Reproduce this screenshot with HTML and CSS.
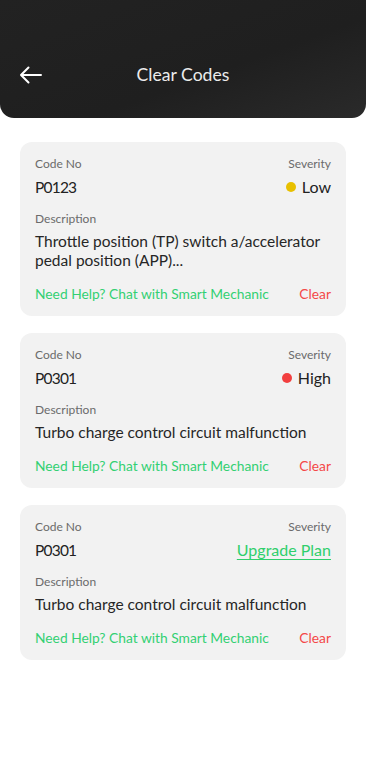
FILE: index.html
```
<!DOCTYPE html>
<html>
<head>
<meta charset="utf-8">
<link rel="stylesheet" href="styles.css">
</head>
<body>
<header class="header">
  <div class="bar">
    <svg class="back" width="24" height="18" viewBox="0 0 24 18"><path d="M22 9H2M9.5 1.5L2 9l7.5 7.5" fill="none" stroke="#fff" stroke-width="2" stroke-linecap="round" stroke-linejoin="round"/></svg>
    <h1 class="title">Clear Codes</h1>
  </div>
</header>
<main class="list">
  <section class="card">
    <div class="row"><span class="label">Code No</span><span class="label">Severity</span></div>
    <div class="row top4"><span class="value code">P0123</span><span class="value sev"><span class="dot low"></span>Low</span></div>
    <div class="label desc-label">Description</div>
    <p class="desc">Throttle position (TP) switch a/accelerator pedal position (APP)...</p>
    <div class="row foot"><a class="help">Need Help? Chat with Smart Mechanic</a><a class="clear">Clear</a></div>
  </section>
  <section class="card">
    <div class="row"><span class="label">Code No</span><span class="label">Severity</span></div>
    <div class="row top4"><span class="value code">P0301</span><span class="value sev"><span class="dot high"></span>High</span></div>
    <div class="label desc-label">Description</div>
    <p class="desc">Turbo charge control circuit malfunction</p>
    <div class="row foot"><a class="help">Need Help? Chat with Smart Mechanic</a><a class="clear">Clear</a></div>
  </section>
  <section class="card">
    <div class="row"><span class="label">Code No</span><span class="label">Severity</span></div>
    <div class="row top4"><span class="value code">P0301</span><a class="value upgrade">Upgrade Plan</a></div>
    <div class="label desc-label">Description</div>
    <p class="desc">Turbo charge control circuit malfunction</p>
    <div class="row foot"><a class="help">Need Help? Chat with Smart Mechanic</a><a class="clear">Clear</a></div>
  </section>
</main>
</body>
</html>
```
FILE: styles.css
```
* { box-sizing: border-box; }
body {
  margin: 0;
  background: #fff;
  font-family: "Lato", "Open Sans", sans-serif;
  color: #222;
}
.header {
  height: 118px;
  background: linear-gradient(160deg, #222 0%, #1f1f1f 60%, #2a2a2a 100%);
  border-radius: 0 0 14px 14px;
  padding-top: 64px;
}
.bar {
  position: relative;
  height: 22px;
  display: flex;
  align-items: center;
  justify-content: center;
}
.back {
  position: absolute;
  left: 19px;
  top: 2px;
}
.title {
  margin: 0;
  font-size: 17.6px;
  font-weight: 400;
  color: #ececec;
  line-height: 22px;
}
.list {
  padding: 24px 20px 0;
  display: flex;
  flex-direction: column;
  gap: 17px;
}
.card {
  background: #f2f2f2;
  border-radius: 12px;
  padding: 14px 15px 13px;
}
.row {
  display: flex;
  justify-content: space-between;
  align-items: center;
}
.top4 { margin-top: 4px; }
.label {
  font-size: 12px;
  line-height: 16px;
  color: #6b6b6b;
}
.value {
  font-size: 16px;
  line-height: 22px;
  color: #222;
}
.code {
  font-size: 15.5px;
  letter-spacing: -0.8px;
}
.sev { display: flex; align-items: center; gap: 6px; }
.dot {
  width: 10px; height: 10px; border-radius: 50%;
}
.dot.low { background: #e8c000; }
.dot.high { background: #f23f3f; }
.upgrade {
  color: #2fcf6c;
  text-decoration: underline;
  text-decoration-thickness: 1px;
  text-underline-offset: 3px;
}
.desc-label { margin-top: 13px; }
.desc {
  margin: 5px 0 0;
  font-size: 15.5px;
  line-height: 19px;
  color: #262626;
}
.foot { margin-top: 15px; }
.help, .clear {
  font-size: 13.8px;
  line-height: 18px;
}
.help { color: #33d072; }
.clear { color: #f44848; }
```
